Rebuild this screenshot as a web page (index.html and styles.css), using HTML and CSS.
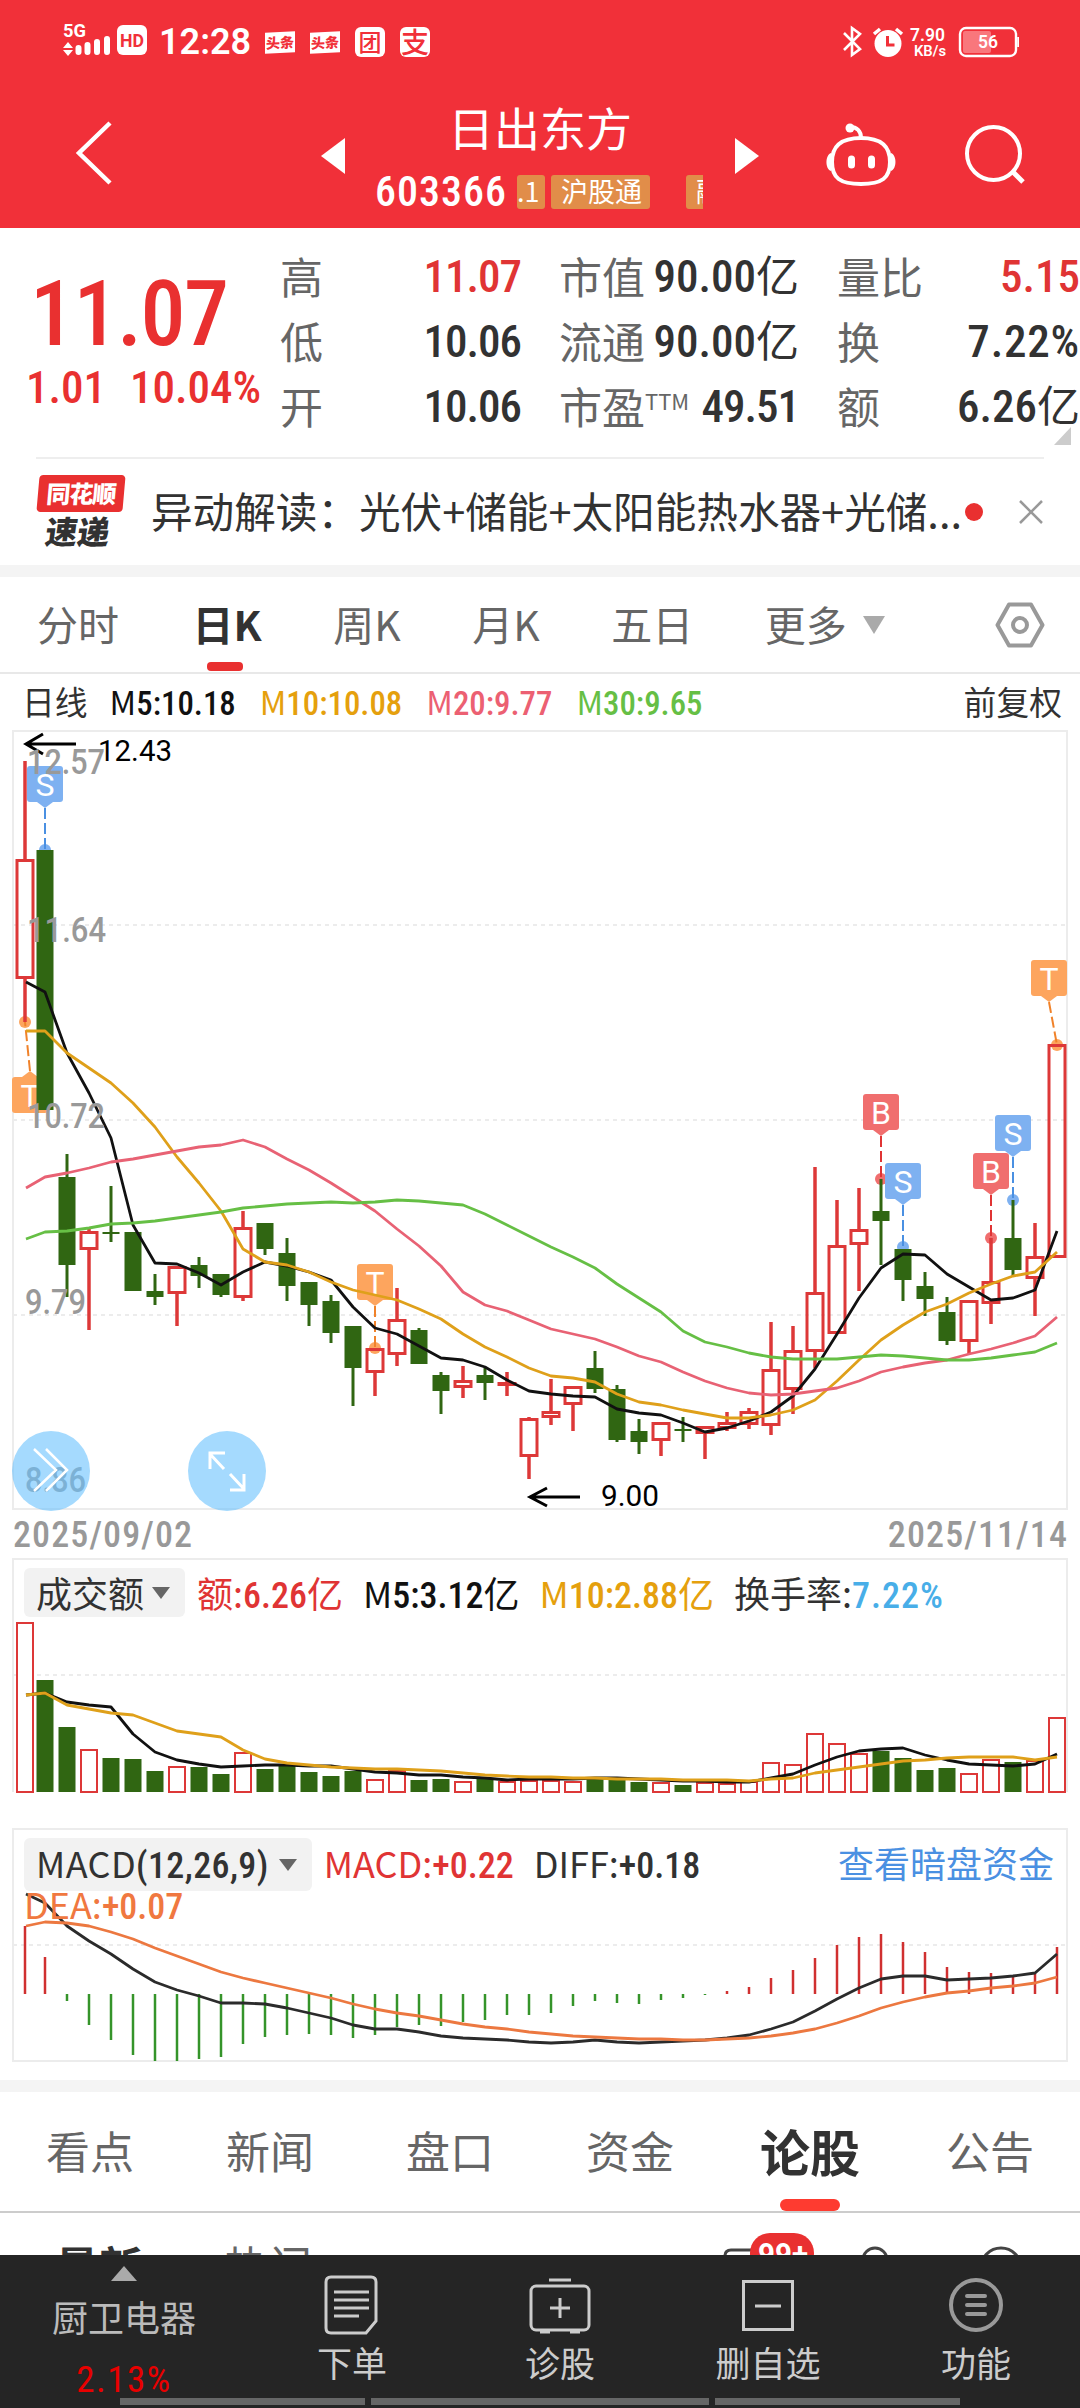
FILE: index.html
```html
<!DOCTYPE html>
<html lang="zh-CN">

<head>
    <meta charset="UTF-8">
    <title>日出东方 603366</title>
    <link rel="stylesheet" href="styles.css">
</head>

<body>
    <header class="header">
        <div class="status">
            <svg class="signal" width="88" height="44" viewBox="0 0 88 44">
                <text x="0" y="16" class="net" textLength="23" lengthAdjust="spacingAndGlyphs">5G</text>
                <path d="M0 27l5-6 5 6zM0 29h10l-5 6z" fill="#fff" />
                <path d="M15.500 27v4M24.500 24v7M34 21v10M44 18v13" class="bars" />
                <rect x="54" y="4" width="30" height="30" rx="6" fill="#fff" />
                <text x="57" y="26" class="hd" textLength="24" lengthAdjust="spacingAndGlyphs">HD</text>
            </svg>
            <span class="clock">12:28</span>
            <span class="toutiao">头条</span>
            <span class="toutiao">头条</span>
            <span class="app-icon"><i>团</i></span>
            <span class="app-icon pay">支</span>
            <svg class="status-right" width="180" height="44" viewBox="840 20 180 44">
                <path d="M845 33l16 16-8 6V28l8 6-16 16" fill="none" stroke="#fff" stroke-width="2.600" />
                <circle cx="889" cy="43.500" r="13.500" fill="#fff" />
                <path d="M875 34l6-5M903 34l-6-5" stroke="#fff" stroke-width="3.500" />
                <path d="M888.500 36v9h7" fill="none" stroke="#f13039" stroke-width="3" />
                <text x="911" y="41" class="speed" textLength="35" lengthAdjust="spacingAndGlyphs">7.90</text>
                <text x="915" y="56" class="speed small" textLength="32" lengthAdjust="spacingAndGlyphs">KB/s</text>
                <rect x="961" y="28" width="56" height="28" rx="6" fill="none" stroke="#fff" stroke-width="2.400" />
                <rect x="964" y="31" width="28" height="22" rx="2" fill="#f9777c" />
                <path d="M1019.200 37v10" stroke="#fff" stroke-width="2" />
                <text x="979" y="48" class="battery" textLength="20" lengthAdjust="spacingAndGlyphs">56</text>
            </svg>
        </div>
        <div class="title-bar">
            <svg class="back" width="40" height="66" viewBox="0 0 40 66">
                <path d="M36 3L5 33l31 30" fill="none" stroke="#fff" stroke-width="4.500" />
            </svg>
            <svg class="prev" width="24" height="36" viewBox="0 0 24 36">
                <path d="M24 0v36L0 18z" fill="#fff" />
            </svg>
            <div class="stock">
                <h1>日出东方</h1>
                <div class="code-row">
                    <span class="num code">603366</span>
                    <div class="tags">
                        <span class="tag first">.1</span>
                        <span class="tag">沪股通</span>
                        <span class="tag last">融</span>
                    </div>
                </div>
            </div>
            <svg class="next" width="24" height="36" viewBox="0 0 24 36">
                <path d="M0 0v36l24-18z" fill="#fff" />
            </svg>
            <svg class="robot" width="72" height="66" viewBox="0 0 72 66">
                <g fill="none" stroke="#fff" stroke-width="4">
                    <path d="M36 16c20 0 29 8 29 24s-8 22-29 22S7 56 7 40s9-24 29-24z" />
                    <path d="M36 16c0-7-4-11-11-11" />
                </g>
                <circle cx="25" cy="6" r="4.500" fill="#fff" />
                <path d="M6 31c-6 2-6 16 0 18zM66 31c6 2 6 16 0 18z" fill="#fff" />
                <path d="M26.500 37v6M46.500 37v6" stroke="#fff" stroke-width="7" stroke-linecap="round" />
            </svg>
            <svg class="search" width="62" height="62" viewBox="0 0 62 62">
                <circle cx="29.500" cy="29.500" r="26.500" fill="none" stroke="#fff" stroke-width="4" />
                <path d="M48 47l11 11" stroke="#fff" stroke-width="5" />
            </svg>
        </div>
    </header>

    <section class="quote">
        <div class="price">
            <div class="num last-price">11.07</div>
            <div class="change"><span class="num">1.01</span><span class="num">10.04%</span></div>
        </div>
        <div class="facts">
            <div class="fact"><label>高</label><b class="num tight red">11.07</b></div>
            <div class="fact"><label>市值</label><b class="num">90.00<i>亿</i></b></div>
            <div class="fact"><label>量比</label><b class="num red">5.15</b></div>
            <div class="fact"><label>低</label><b class="num tight">10.06</b></div>
            <div class="fact"><label>流通</label><b class="num">90.00<i>亿</i></b></div>
            <div class="fact"><label>换</label><b class="num wide">7.22%</b></div>
            <div class="fact"><label>开</label><b class="num tight">10.06</b></div>
            <div class="fact"><label>市盈<sup>TTM</sup></label><b class="num tight">49.51</b></div>
            <div class="fact"><label>额</label><b class="num">6.26<i>亿</i></b></div>
        </div>
        <span class="corner"></span>
    </section>

    <section class="news">
        <div class="news-logo">
            <span class="logo-top">同花顺</span>
            <span class="logo-bottom">速递</span>
        </div>
        <p>异动解读：光伏+储能+太阳能热水器+光储...</p>
        <span class="dot"></span>
        <svg width="24" height="24" viewBox="0 0 24 24">
            <path d="M1 1l22 22M23 1L1 23" stroke="#999" stroke-width="2.500" />
        </svg>
    </section>

    <nav class="periods">
        <span>分时</span>
        <span class="active">日K</span>
        <span>周K</span>
        <span>月K</span>
        <span>五日</span>
        <span class="more">更多<i></i></span>
        <svg width="50" height="46" viewBox="0 0 50 46">
            <path d="M14 2.500h22L47.500 23 36 43.500H14L2.500 23z" fill="none" stroke="#999" stroke-width="4" stroke-linejoin="round" />
            <circle cx="25" cy="23" r="7" fill="none" stroke="#999" stroke-width="4" />
        </svg>
    </nav>

    <section class="ma-row">
        <span class="name">日线</span>
        <span class="num m5"><em>M</em>5:10.18</span>
        <span class="num m10"><em>M</em>10:10.08</span>
        <span class="num m20"><em>M</em>20:9.77</span>
        <span class="num m30"><em>M</em>30:9.65</span>
        <span class="adjust">前复权</span>
    </section>

    <section class="kline">
        <svg id="kline" width="1080" height="784" viewBox="0 730 1080 784"></svg>
        <div class="tools">
            <svg width="78" height="80" viewBox="0 0 78 80">
                <path d="M22 18l22 21-22 21M34 18l21 21-21 21" fill="none" stroke="#fff" stroke-width="2.500" />
            </svg>
            <svg width="78" height="80" viewBox="0 0 78 80">
                <path d="M36 38L22 23M22 38V22h15M42 43l14 15M56 43v16H42" fill="none" stroke="#fff" stroke-width="3" />
            </svg>
        </div>
    </section>
    <div class="dates"><span class="num">2025/09/02</span><span class="num">2025/11/14</span></div>

    <section class="panel volume">
        <svg id="volume" width="1080" height="240" viewBox="0 1558 1080 240"></svg>
        <div class="panel-head">
            <span class="pill">成交额<i></i></span>
            <span class="num red"><em>额:</em>6.26<em>亿</em></span>
            <span class="num m5"><em>M</em>5:3.12<em>亿</em></span>
            <span class="num m10"><em>M</em>10:2.88<em>亿</em></span>
            <span class="num"><em>换手率:</em><b class="blue">7.22%</b></span>
        </div>
    </section>

    <section class="panel macd">
        <svg id="macd" width="1080" height="236" viewBox="0 1828 1080 236"></svg>
        <div class="panel-head">
            <span class="pill num"><em>MACD</em>(12,26,9)<i></i></span>
            <span class="num red"><em>MACD:</em>+0.22</span>
            <span class="num diff"><em>DIFF:</em>+0.18</span>
            <span class="link">查看暗盘资金</span>
            <span class="num dea"><em>DEA:</em>+0.07</span>
        </div>
    </section>

    <nav class="tabs">
        <span>看点</span>
        <span>新闻</span>
        <span>盘口</span>
        <span>资金</span>
        <span class="active">论股</span>
        <span>公告</span>
    </nav>

    <section class="posts">
        <b>最新</b>
        <span>热门</span>
        <div class="post-icons">
            <svg width="310" height="43" viewBox="720 2212 310 43">
                <path d="M725 2270v-15q0-6 6-6h26" class="line" />
                <rect x="750" y="2232" width="64" height="40" rx="20" fill="#e93030" />
                <text x="758" y="2264" class="badge" textLength="50" lengthAdjust="spacingAndGlyphs">99+</text>
                <circle cx="875" cy="2259" r="12" class="line" />
                <circle cx="1001" cy="2267" r="20" class="line" />
            </svg>
        </div>
    </section>

    <footer class="bottom">
        <div class="sector">
            <i></i>
            <span>厨卫电器</span>
            <b class="num">2.13%</b>
        </div>
        <div class="action">
            <svg width="60" height="60" viewBox="0 0 60 60">
                <path d="M9 2h40q5 0 5 5v39L44 58H9q-5 0-5-5V7q0-5 5-5z" />
                <path d="M12 17h35M12 25h35M12 33h35M12 41h25" />
            </svg>
            <span>下单</span>
        </div>
        <div class="action">
            <svg width="64" height="60" viewBox="0 0 64 60">
                <rect x="3" y="11" width="58" height="44" rx="5" />
                <path d="M21 5h22M32 23v20M22 33h20" />
                <path d="M12 57h10M42 57h10" />
            </svg>
            <span>诊股</span>
        </div>
        <div class="action">
            <svg width="60" height="60" viewBox="0 0 60 60">
                <rect x="5.500" y="6.500" width="49" height="48" />
                <path d="M17 31h26" />
            </svg>
            <span>删自选</span>
        </div>
        <div class="action dim">
            <svg width="60" height="60" viewBox="0 0 60 60">
                <circle cx="30" cy="30" r="25" />
                <path d="M21 21h18M21 30h18M21 39h18" stroke-linecap="round" />
            </svg>
            <span>功能</span>
        </div>
        <div class="gesture"><i></i><i class="mid"></i><i></i></div>
    </footer>

    <script src="chart.js"></script>
</body>

</html>
```

FILE: styles.css
```css
body {
    margin: 0;
    width: 1080px;
    height: 2408px;
    overflow: hidden;
    background-color: #fff;
    color: #323232;
    font-family: "Noto Sans CJK SC", sans-serif;
    position: relative;
}

i, em {
    font-style: normal;
}

svg {
    display: block;
    flex: none;
}

.num {
    font-family: Roboto, "Noto Sans CJK SC", sans-serif;
    font-weight: 460;
    font-stretch: 75%;
    white-space: nowrap;
}

.red {
    color: #e03434;
}

.m5 { color: #111; }
.m10 { color: #e5a00d; }
.m20 { color: #ec6072; }
.m30 { color: #66bf45; }

/* header */

.header {
    height: 228px;
    background-color: #f13039;
    color: #fff;
}

.status {
    display: flex;
    height: 84px;
    padding: 0 61px 0 63px;
    align-items: center;
}

.signal {
    margin-top: 2px;
}

.net {
    font: 700 19px Roboto, sans-serif;
    fill: #fff;
}

.bars {
    stroke: #fff;
    stroke-width: 6;
    stroke-linecap: round;
}

.hd {
    font: 700 18px Roboto, sans-serif;
    fill: #f13039;
}

.clock {
    width: 106px;
    margin-left: 8px;
    font: 600 36px Roboto, sans-serif;
}

.toutiao {
    width: 30px;
    height: 21px;
    margin-right: 15px;
    background-color: #fff;
    color: #f13039;
    font-size: 14px;
    font-weight: 900;
    line-height: 21px;
    text-align: center;
    transform: skewY(-3deg);
}

.app-icon {
    width: 30px;
    height: 30px;
    margin-right: 15px;
    border-radius: 6px;
    background-color: #fff;
    color: #f13039;
    font-size: 28px;
    font-weight: 500;
    line-height: 29px;
    text-align: center;
}

.app-icon i {
    display: block;
    font-size: 23px;
}

.status-right {
    margin-left: auto;
}

.speed {
    font: 600 19px Roboto, sans-serif;
    fill: #fff;
}

.small {
    font-size: 15px;
}

.battery {
    font: 600 19px Roboto, sans-serif;
    fill: #fff;
}

.title-bar {
    display: flex;
    height: 144px;
    align-items: flex-start;
    padding-left: 74px;
}

.back {
    margin-top: 36px;
}

.prev {
    margin: 54px 0 0 207px;
}

.stock {
    width: 330px;
    margin: 8px 30px 0;
}

.stock h1 {
    margin: 0;
    font-size: 46px;
    font-weight: 400;
    line-height: 68px;
    text-align: center;
}

.code-row {
    display: flex;
    height: 34px;
    margin-top: 15px;
    line-height: 34px;
}

.code {
    width: 142px;
    font-size: 42px;
    font-weight: 500;
    letter-spacing: 1px;
}

.tags {
    display: flex;
    width: 186px;
    overflow: hidden;
}

.tag {
    flex: none;
    box-sizing: border-box;
    width: 99px;
    padding-left: 10px;
    margin-right: 36px;
    border-radius: 3px;
    background-color: #e18d49;
    font-size: 27px;
    line-height: 32px;
}

.tag.first {
    width: 28px;
    padding-left: 0;
    margin-right: 6px;
}

.tag.last {
    width: 60px;
}

.next {
    margin-top: 54px;
}

.robot {
    margin: 38px 0 0 66px;
}

.search {
    margin: 40px 0 0 67px;
}

/* quote */

.quote {
    position: relative;
    display: flex;
    height: 229px;
}

.price {
    width: 280px;
    color: #e93030;
}

.last-price {
    height: 106px;
    padding: 34px 0 0 30px;
    font-size: 90px;
    line-height: 106px;
    font-weight: 520;
    letter-spacing: -1.500px;
}

.change {
    display: flex;
    gap: 24px;
    padding-left: 26px;
    font-size: 45px;
    line-height: 44px;
    margin-top: -2px;
}

.facts {
    display: grid;
    width: 800px;
    padding-top: 15px;
    grid-template-columns: 241px 240px 243px;
    grid-auto-rows: 65px;
    column-gap: 38px;
}

.fact {
    display: flex;
    justify-content: space-between;
    font-size: 43px;
    line-height: 65px;
}

.fact label {
    color: #666;
    white-space: nowrap;
}

.fact sup {
    font-size: 22px;
    line-height: 1;
    vertical-align: 14px;
}

.fact .num {
    font-size: 45px;
    font-weight: 500;
    padding-top: 1px;
}

.fact .tight {
    letter-spacing: -1px;
}

.fact .wide {
    letter-spacing: 0.800px;
}

.fact .num i {
    font-size: 43px;
    font-weight: 400;
}

.corner {
    position: absolute;
    right: 9px;
    bottom: 12px;
    border-left: 17px solid transparent;
    border-bottom: 18px solid #ccc;
}

/* news line */

.news {
    display: flex;
    align-items: center;
    height: 106px;
    margin: 0 36px;
    border-top: 2px solid #eee;
}

.news-logo {
    width: 115px;
    height: 74px;
}

.logo-top,
.logo-bottom {
    display: block;
    width: 86px;
    height: 37px;
    margin-left: 2px;
    text-align: center;
    transform: skewX(-5deg);
}

.logo-top {
    border-radius: 4px;
    background-color: #e93030;
    color: #fff;
    font-size: 24px;
    font-weight: 900;
    letter-spacing: -1px;
    line-height: 36px;
}

.logo-bottom {
    width: 80px;
    font-size: 32px;
    font-weight: 900;
    line-height: 36px;
    transform: skewX(-8deg);
}

.news p {
    width: 814px;
    margin: -5px 0 0;
    font-size: 41.600px;
    white-space: nowrap;
}

.dot {
    width: 18px;
    height: 18px;
    margin-right: 36px;
    border-radius: 50%;
    background-color: #e93030;
}

/* periods */

.periods {
    display: flex;
    align-items: center;
    height: 95px;
    border-top: 12px solid #f4f4f4;
    border-bottom: 2px solid #e8e8e8;
    padding: 0 35px 0 37px;
    font-size: 41px;
    color: #666;
}

.periods span {
    margin-top: -3px;
    white-space: nowrap;
    margin-right: 71.500px;
}

.periods .active {
    position: relative;
    margin-left: 2px;
    color: #323232;
    font-weight: 700;
}

.periods .active::after {
    content: "";
    position: absolute;
    left: 14px;
    bottom: -18px;
    width: 36px;
    height: 9px;
    border-radius: 4px;
    background-color: #e93030;
}

.periods .more {
    display: flex;
    align-items: center;
    margin-right: auto;
}

.more i {
    margin: 4px 0 0 16px;
    border: 11px solid transparent;
    border-top: 18px solid #aaa;
    border-bottom: 0;
}

/* averages */

.ma-row {
    display: flex;
    height: 56px;
    padding: 0 18px 0 22px;
    font-size: 32.800px;
    line-height: 53px;
}

.ma-row span {
    margin-right: 24px;
}

.ma-row .name {
    margin-right: 22px;
}

.ma-row em,
.panel-head em {
    font-family: "Noto Sans CJK SC", sans-serif;
    font-weight: 400;
}

.ma-row .adjust {
    margin: 0 0 0 auto;
}

/* charts */

.kline {
    position: relative;
    height: 784px;
}

.tools {
    position: absolute;
    left: 12px;
    top: 701px;
    display: flex;
    gap: 98px;
}

.tools svg {
    border-radius: 50%;
    background-color: rgba(105, 193, 254, 0.6);
}

.dates {
    display: flex;
    justify-content: space-between;
    height: 44px;
    padding: 0 12px 0 13px;
    color: #999;
    font-size: 36px;
    line-height: 42px;
}

.dates .num {
    letter-spacing: 1.100px;
    font-weight: 500;
}

.panel {
    display: grid;
    height: 270px;
}

.panel > * {
    grid-area: 1 / 1;
}

.macd {
    height: 252px;
}

.panel-head {
    display: flex;
    flex-wrap: wrap;
    align-items: baseline;
    align-content: flex-start;
    padding: 10px 26px 0 24px;
    font-size: 36px;
    line-height: 49px;
}

.panel-head > span {
    margin-right: 20px;
}

.panel-head .pill {
    display: flex;
    align-items: baseline;
    margin-right: 12px;
    padding: 0 15px 0 12px;
    border-radius: 6px;
    background-color: #f2f2f2;
}

.pill i {
    align-self: center;
    margin-left: 8px;
    border: 9px solid transparent;
    border-top: 12px solid #666;
    border-bottom: 0;
}

.macd .pill {
    letter-spacing: 0.400px;
}

.macd .pill i {
    margin-left: 10px;
}

.blue {
    color: #48aee8;
    font-weight: 500;
    letter-spacing: 1px;
}

.panel-head .link {
    margin: 0 0 0 auto;
    color: #4a90e2;
}

.panel-head .dea {
    width: 100%;
    margin: -8px 0 0;
    line-height: 40px;
    color: #f07840;
}

.frame { fill: none; stroke: #ececec; stroke-width: 2; }
.grid { stroke: #ececec; stroke-width: 2; stroke-dasharray: 4 4; }
.up { fill: #fff; stroke: #dd3838; stroke-width: 3; }
.up-wick { stroke: #dd3838; stroke-width: 3.5; }
.down { fill: #306612; }
.down-wick { stroke: #306612; stroke-width: 3; }
.avg { fill: none; stroke-width: 2.8; stroke-linejoin: round; }
.axis { font: 500 35px Roboto, sans-serif; fill: #999; }
.peak { font: 400 30px Roboto, sans-serif; fill: #000; }
.arrow { fill: none; stroke: #000; stroke-width: 3; }
.mark { font: 400 32px Roboto, sans-serif; fill: #fff; text-anchor: middle; }

/* tabs */

.tabs {
    display: flex;
    height: 119px;
    border-top: 12px solid #f4f4f4;
    border-bottom: 2px solid #ccc;
    color: #666;
    font-size: 44px;
    line-height: 117px;
    text-align: center;
}

.tabs span {
    position: relative;
    width: 180px;
}

.tabs .active {
    color: #323232;
    font-size: 50px;
    font-weight: 700;
}

.tabs .active::after {
    content: "";
    position: absolute;
    left: 60px;
    bottom: 0;
    width: 60px;
    height: 12px;
    border-radius: 6px;
    background-color: #fe3b30;
}

.posts {
    display: flex;
    height: 42px;
    overflow: hidden;
    padding-left: 55px;
    font-size: 44px;
    line-height: 105px;
}

.posts b {
    width: 169px;
}

.posts span {
    width: 496px;
    color: #666;
}

.line {
    fill: none;
    stroke: #444;
    stroke-width: 3;
}

.badge {
    font: 700 32px Roboto, sans-serif;
    fill: #fff;
}

/* bottom bar */

.bottom {
    position: relative;
    display: flex;
    height: 153px;
    background-color: #252525;
    color: #ccc;
    font-size: 35px;
}

.sector {
    display: flex;
    flex-direction: column;
    align-items: center;
    width: 248px;
    color: #bbb;
}

.sector i {
    margin-top: 11px;
    border: 13px solid transparent;
    border-bottom: 15px solid #aaa;
    border-top: 0;
}

.sector span {
    margin-top: 9px;
    line-height: 52px;
    font-size: 36px;
}

.sector b {
    margin-top: 16px;
    line-height: 44px;
    font-size: 37px;
    font-weight: 400;
    letter-spacing: 1.500px;
    color: #e80000;
}

.action {
    display: flex;
    flex-direction: column;
    align-items: center;
    width: 208px;
    padding-top: 20px;
}

.action svg {
    fill: none;
    stroke: #ccc;
    stroke-width: 3;
}

.action span {
    line-height: 54px;
}

.dim svg {
    stroke: #999;
    stroke-width: 4;
}

.gesture {
    position: absolute;
    left: 120px;
    bottom: 3px;
    display: flex;
    gap: 6px;
}

.gesture i {
    width: 245px;
    height: 7px;
    background-color: #666;
}

.gesture .mid {
    width: 338px;
}
```

FILE: chart.js
```js
// direction, high, body top, body bottom, low
var candles = [
    ["r", 761, 859, 979, 1022], ["g", 850, 850, 1110, 1110], ["g", 1154, 1177, 1265, 1297],
    ["r", 1229, 1231, 1250, 1330], ["g", 1186, 1232, 1234, 1242], ["g", 1232, 1232, 1291, 1291],
    ["g", 1274, 1291, 1297, 1305], ["r", 1266, 1266, 1294, 1326], ["g", 1257, 1265, 1276, 1288],
    ["g", 1274, 1274, 1295, 1297], ["r", 1211, 1227, 1298, 1301], ["g", 1223, 1223, 1249, 1255],
    ["g", 1238, 1253, 1286, 1301], ["g", 1282, 1282, 1305, 1326], ["g", 1295, 1301, 1333, 1343],
    ["g", 1326, 1326, 1368, 1406], ["r", 1348, 1348, 1373, 1396], ["r", 1288, 1319, 1355, 1366],
    ["g", 1328, 1330, 1364, 1364], ["g", 1372, 1375, 1391, 1414], ["r", 1366, 1380, 1388, 1398],
    ["g", 1368, 1375, 1383, 1400], ["r", 1372, 1382, 1386, 1396], ["r", 1417, 1418, 1457, 1479],
    ["r", 1379, 1411, 1418, 1425], ["r", 1386, 1386, 1405, 1431], ["g", 1351, 1368, 1389, 1393],
    ["g", 1385, 1389, 1440, 1442], ["g", 1419, 1431, 1442, 1454], ["r", 1422, 1422, 1441, 1456],
    ["g", 1417, 1429, 1431, 1442], ["r", 1426, 1426, 1434, 1459], ["r", 1412, 1422, 1429, 1431],
    ["r", 1408, 1411, 1425, 1429], ["r", 1322, 1369, 1426, 1435], ["r", 1326, 1350, 1390, 1414],
    ["r", 1167, 1292, 1352, 1368], ["r", 1200, 1245, 1334, 1334], ["r", 1188, 1229, 1245, 1291],
    ["g", 1179, 1211, 1221, 1265], ["g", 1249, 1249, 1280, 1301], ["g", 1272, 1286, 1299, 1316],
    ["g", 1297, 1312, 1341, 1345], ["r", 1300, 1300, 1342, 1354], ["r", 1238, 1281, 1304, 1324],
    ["g", 1200, 1238, 1270, 1277], ["r", 1223, 1256, 1279, 1316], ["r", 1044, 1044, 1258, 1258]
];

var m5 = [982, 992, 1053, 1093, 1138, 1225, 1263, 1264, 1273, 1285, 1272, 1262, 1266, 1272, 1280, 1307, 1328, 1334, 1346, 1358, 1360, 1367, 1380, 1391, 1394, 1396, 1397, 1409, 1413, 1415, 1423, 1432, 1428, 1421, 1412, 1396, 1369, 1334, 1298, 1268, 1254, 1255, 1274, 1287, 1300, 1298, 1290, 1231];
var m10 = [1031, 1031, 1053, 1068, 1083, 1103, 1127, 1157, 1183, 1211, 1249, 1262, 1265, 1272, 1282, 1290, 1295, 1300, 1309, 1319, 1334, 1347, 1357, 1368, 1376, 1378, 1382, 1394, 1402, 1405, 1410, 1414, 1418, 1418, 1415, 1410, 1400, 1381, 1360, 1340, 1325, 1312, 1304, 1293, 1284, 1276, 1272, 1252];
var m20 = [1188, 1177, 1173, 1168, 1162, 1159, 1155, 1151, 1147, 1145, 1140, 1147, 1159, 1170, 1183, 1197, 1211, 1229, 1246, 1266, 1292, 1305, 1311, 1320, 1329, 1334, 1339, 1347, 1356, 1362, 1372, 1381, 1388, 1393, 1395, 1394, 1391, 1388, 1381, 1372, 1367, 1363, 1360, 1354, 1349, 1343, 1336, 1317];
var m30 = [1239, 1232, 1231, 1228, 1224, 1223, 1221, 1218, 1215, 1212, 1208, 1206, 1204, 1203, 1202, 1203, 1202, 1200, 1201, 1203, 1205, 1214, 1225, 1236, 1247, 1257, 1268, 1284, 1298, 1312, 1331, 1342, 1347, 1353, 1357, 1359, 1359, 1359, 1357, 1355, 1356, 1358, 1360, 1360, 1358, 1355, 1352, 1343];

var vol = [1622, 1680, 1727, 1749, 1758, 1759, 1771, 1766, 1767, 1774, 1752, 1769, 1765, 1772, 1776, 1771, 1779, 1770, 1780, 1779, 1781, 1779, 1781, 1780, 1780, 1781, 1779, 1779, 1782, 1782, 1785, 1782, 1783, 1781, 1762, 1764, 1733, 1743, 1753, 1751, 1758, 1770, 1768, 1773, 1759, 1762, 1760, 1717];
var vol5 = [1695, 1693, 1702, 1705, 1707, 1734, 1752, 1760, 1764, 1767, 1766, 1765, 1765, 1766, 1766, 1769, 1772, 1773, 1775, 1775, 1777, 1778, 1780, 1779, 1779, 1779, 1778, 1778, 1779, 1780, 1781, 1781, 1782, 1782, 1778, 1774, 1765, 1757, 1751, 1749, 1748, 1755, 1760, 1764, 1765, 1766, 1764, 1754];
var vol10 = [1695, 1693, 1705, 1709, 1713, 1715, 1723, 1731, 1734, 1737, 1750, 1759, 1763, 1765, 1767, 1768, 1769, 1769, 1770, 1771, 1773, 1775, 1776, 1777, 1777, 1778, 1778, 1779, 1779, 1779, 1780, 1780, 1780, 1781, 1779, 1778, 1773, 1770, 1767, 1764, 1761, 1760, 1758, 1757, 1757, 1757, 1760, 1757];

var macd = [1926, 1957, 2001, 2025, 2040, 2055, 2061, 2061, 2059, 2057, 2044, 2037, 2035, 2034, 2035, 2038, 2035, 2027, 2025, 2026, 2022, 2020, 2015, 2015, 2013, 2006, 2001, 2003, 2004, 2000, 1998, 1995, 1991, 1987, 1978, 1970, 1958, 1945, 1937, 1934, 1942, 1952, 1967, 1972, 1973, 1975, 1973, 1947];
var diff = [1894, 1903, 1926, 1941, 1954, 1969, 1982, 1990, 1996, 2003, 2003, 2004, 2008, 2013, 2018, 2025, 2029, 2029, 2032, 2036, 2038, 2039, 2040, 2042, 2043, 2042, 2040, 2042, 2043, 2042, 2041, 2040, 2038, 2035, 2029, 2022, 2011, 1999, 1988, 1979, 1976, 1976, 1980, 1979, 1978, 1976, 1973, 1954];
var dea = [1926, 1922, 1923, 1926, 1932, 1939, 1948, 1956, 1964, 1972, 1978, 1983, 1988, 1993, 1998, 2004, 2009, 2013, 2016, 2020, 2024, 2027, 2029, 2032, 2034, 2036, 2037, 2038, 2039, 2039, 2040, 2040, 2039, 2038, 2036, 2033, 2029, 2023, 2016, 2008, 2002, 1997, 1993, 1991, 1988, 1986, 1983, 1977];

// letter, box centre x, box top, dot x, dot y
var marks = [
    ["S", 45, 766, 45, 850], ["T", 30, 1077, 25, 1022], ["T", 375, 1264, 375, 1348],
    ["B", 881, 1094, 881, 1179], ["S", 903, 1163, 903, 1247], ["B", 991, 1153, 991, 1238],
    ["S", 1013, 1115, 1013, 1200], ["T", 1049, 960, 1057, 1045]
];
var markColors = { S: ["#7eb1f1", "#4a90e2"], T: ["#fda55e", "#f0822a"], B: ["#f06e6e", "#e03434"] };

function cx(i) {
    return i === 0 ? 25 : i === 1 ? 45 : 67 + (i - 2) * 22;
}

function line(x1, y1, x2, y2, cls) {
    return '<line x1="' + x1 + '" y1="' + y1 + '" x2="' + x2 + '" y2="' + y2 + '" class="' + cls + '"/>';
}

function rect(x, y, w, h, cls) {
    return '<rect x="' + x + '" y="' + y + '" width="' + w + '" height="' + h + '" class="' + cls + '"/>';
}

function curve(values, color) {
    var pts = values.map(function (v, i) {
        return (i === 0 ? 26 : cx(i)) + "," + v;
    });
    return '<polyline points="' + pts.join(" ") + '" class="avg" stroke="' + color + '"/>';
}

function text(x, y, w, cls, s) {
    return '<text x="' + x + '" y="' + y + '" textLength="' + w + '" lengthAdjust="spacingAndGlyphs" class="' + cls + '">' + s + '</text>';
}

function drawMark(m) {
    var c = markColors[m[0]];
    var below = m[4] < m[2];
    var tip = below ? m[2] - 6 : m[2] + 42;
    var base = below ? m[2] : m[2] + 36;
    return '<rect x="' + (m[1] - 18) + '" y="' + m[2] + '" width="36" height="36" rx="3" fill="' + c[0] + '"/>' +
        '<path d="M' + (m[1] - 8) + ' ' + base + 'h16L' + m[1] + ' ' + tip + 'z" fill="' + c[0] + '"/>' +
        '<circle cx="' + m[3] + '" cy="' + m[4] + '" r="6" fill="' + c[0] + '"/>' +
        '<line x1="' + m[1] + '" y1="' + tip + '" x2="' + m[3] + '" y2="' + m[4] + '" stroke="' + c[1] + '" stroke-width="2" stroke-dasharray="11 4"/>' +
        '<text x="' + m[1] + '" y="' + (m[2] + 30) + '" class="mark">' + m[0] + '</text>';
}

function drawKline() {
    var s = rect(13, 731, 1054, 778, "frame");
    [925, 1120, 1315].forEach(function (y) {
        s += line(13, y, 1066, y, "grid");
    });
    s += marks.map(drawMark).join("");
    candles.forEach(function (c, i) {
        var x = cx(i);
        if (c[0] === "r") {
            s += line(x, c[1], x, c[2], "up-wick") + line(x, c[3], x, c[4], "up-wick");
            s += '<rect x="' + (x - 8) + '" y="' + (c[2] + 1.5) + '" width="16" height="' + Math.max(c[3] - c[2] - 3, 1) + '" class="up" style="fill:none"/>';
        } else {
            s += line(x, c[1], x, c[4], "down-wick") + rect(x - 8.5, c[2], 17, c[3] - c[2], "down");
        }
    });
    s += curve(m5, "#111") + curve(m10, "#dfa01a") + curve(m20, "#e86274") + curve(m30, "#66bf45");
    s += '<path d="M76 744H26M43 734l-17 10 17 10M580 1497h-49M547 1488l-17 9 17 9" class="arrow"/>';
    s += text(27, 774, 78, "axis", "12.57") + text(27, 942, 79, "axis", "11.64") + text(27, 1128, 78, "axis", "10.72");
    s += text(25, 1314, 61, "axis", "9.79") + text(25, 1492, 61, "axis", "8.86");
    s += text(98, 761, 74, "peak", "12.43") + text(601, 1506, 58, "peak", "9.00");
    document.getElementById("kline").innerHTML = s;
}

function drawVolume() {
    var s = '<path d="M13 1792V1559h1054v233" class="frame"/>' + line(13, 1675, 1066, 1675, "grid");
    vol.forEach(function (y, i) {
        if (candles[i][0] === "r") {
            s += '<rect x="' + (cx(i) - 8) + '" y="' + (y + 1) + '" width="16" height="' + (1791 - y) + '" class="up" style="stroke-width:2"/>';
        } else {
            s += rect(cx(i) - 8.5, y, 17, 1792 - y, "down");
        }
    });
    s += curve(vol5, "#111") + curve(vol10, "#dfa01a");
    document.getElementById("volume").innerHTML = s;
}

function drawMacd() {
    var s = rect(13, 1829, 1054, 232, "frame") + line(13, 1945, 1066, 1945, "grid");
    macd.forEach(function (y, i) {
        s += '<line x1="' + cx(i) + '" x2="' + cx(i) + '" y1="1994" y2="' + y + '" stroke="' + (y < 1994 ? "#d03030" : "#35942a") + '" stroke-width="2.500"/>';
    });
    s += curve(diff, "#2b2b2b") + curve(dea, "#ec7840");
    document.getElementById("macd").innerHTML = s;
}

drawKline();
drawVolume();
drawMacd();
```
